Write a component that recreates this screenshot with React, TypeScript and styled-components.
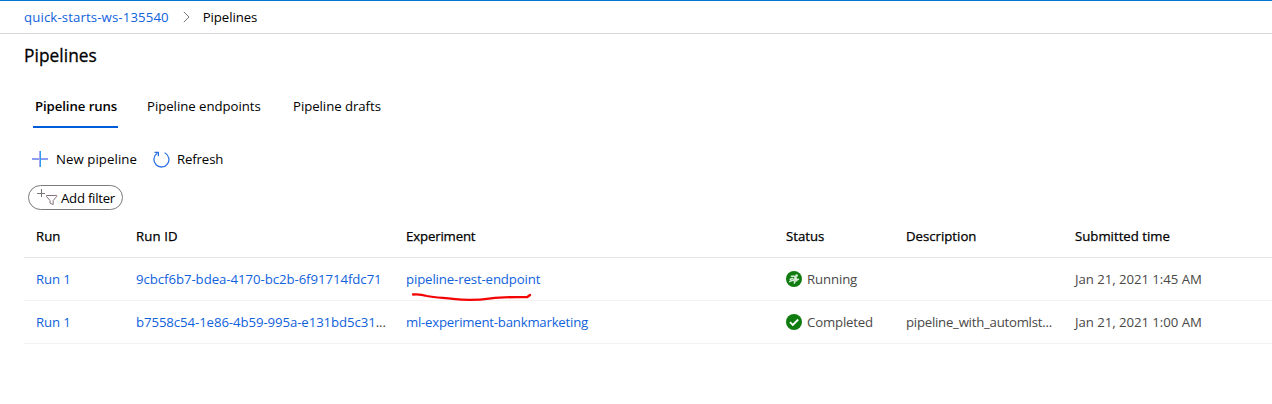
import React from "react";
import styled, { createGlobalStyle } from "styled-components";

const Global = createGlobalStyle`
  * { box-sizing: border-box; }
  body {
    margin: 0;
    background: #fff;
    color: #000;
    font-family: "Open Sans", "Noto Sans", sans-serif;
    font-size: 13.2px;
    line-height: 20px;
    overflow: hidden;
  }
`;

const Page = styled.div`
  height: 404px;
  border-top: 1px solid #0078d4;
  white-space: nowrap;
`;
const Label = styled.span<{ $ls?: number }>`
  letter-spacing: ${(p) => p.$ls ?? 0}px;
`;
const Breadcrumb = styled.nav`
  display: flex;
  align-items: center;
  height: 33px;
  padding-left: 24px;
  border-bottom: 1px solid #d6d6d6;
`;
const Link = styled.a<{ $ls?: number }>`
  color: #1062dc;
  letter-spacing: ${(p) => p.$ls ?? 0}px;
`;
const Chevron = styled.svg`
  margin: 0 13px 0 14px;
`;
const Title = styled.h1`
  margin: 9px 0 0 24px;
  font-size: 17.3px;
  line-height: 26px;
  font-weight: 400;
  letter-spacing: 0.07px;
  -webkit-text-stroke: 0.3px #000;
`;
const Tabs = styled.div`
  display: flex;
  height: 44px;
  margin: 15px 0 0 33px;
`;
const Tab = styled.div<{ $active?: boolean; $width: number; $ls?: number }>`
  width: ${(p) => p.$width}px;
  height: 44px;
  padding: 12px 0 0 2px;
  margin-right: 27px;
  font-weight: ${(p) => (p.$active ? 600 : 400)};
  letter-spacing: ${(p) => p.$ls ?? 0}px;
  border-bottom: 2px solid ${(p) => (p.$active ? "#015cda" : "transparent")};
`;
const Toolbar = styled.div`
  display: flex;
  align-items: center;
  height: 20px;
  margin: 21px 0 0 32px;
`;
const Command = styled.div<{ $width: number; $gap?: number }>`
  display: flex;
  align-items: center;
  gap: ${(p) => p.$gap ?? 8}px;
  width: ${(p) => p.$width}px;
`;
const FilterPill = styled.div`
  display: flex;
  align-items: center;
  width: 95px;
  height: 25px;
  margin: 16px 0 0 28px;
  padding: 1px 0 0 8px;
  gap: 3px;
  border: 1px solid #7c7a78;
  border-radius: 13px;
`;
const Table = styled.div`
  margin-left: 24px;
`;
const Row = styled.div<{ $head?: boolean }>`
  display: grid;
  grid-template-columns: 100px 270px 380px 120px 169px 1fr;
  align-items: center;
  height: ${(p) => (p.$head ? 48 : 43)}px;
  padding: ${(p) => (p.$head ? "5px 0 0 12px" : "0 0 0 12px")};
  border-bottom: 1px solid ${(p) => (p.$head ? "#e8e7e6" : "#f3f2f1")};
  color: ${(p) => (p.$head ? "#000" : "#4a4846")};
  -webkit-text-stroke: ${(p) => (p.$head ? "0.25px #000" : "0")};
`;
const Cell = styled.div`
  display: flex;
  align-items: center;
`;
const Status = styled.div`
  display: flex;
  align-items: center;
  gap: 5px;
`;
const Marked = styled.div`
  position: relative;
`;
const Stroke = styled.svg`
  position: absolute;
  left: 3px;
  top: 21px;
`;

const PlusIcon = () => (
  <svg width="16" height="16" viewBox="0 0 16 16" fill="none" strokeWidth="2">
    <path d="M0 8H16" stroke="#8d9df2" />
    <path d="M7.5 0V16" stroke="#a9a6f2" strokeWidth="1" />
    <path d="M8.5 0V16" stroke="#2f9cf4" strokeWidth="1" />
  </svg>
);
const RefreshIcon = () => (
  <svg width="17" height="17" viewBox="0 0 17 17" fill="none" stroke="#2a6fe4" strokeWidth="1.25">
    <path d="M11.6 1.7A7.5 7.5 0 1 1 4.2 2.3M1.5 1.3H5.4V5.3" />
  </svg>
);
const FilterIcon = () => (
  <svg width="21" height="18" viewBox="0 0 21 18" fill="none" stroke="#777" strokeWidth="1">
    <path d="M4.5 0V8M0 4.5H8" />
    <path d="M9.5 6.5H19.7V7.5L16.2 11.5V15.5L13 14.2V11.5L9.5 7.5Z" stroke="#83727b" />
  </svg>
);
const RunningIcon = () => (
  <svg width="16" height="16" viewBox="0 0 16 16">
    <circle cx="8" cy="8" r="8" fill="#107c10" />
    <g fill="none" stroke="#d8ebd8" strokeWidth="1.6" strokeLinecap="round" strokeLinejoin="round">
      <path d="M5.4 5.2L8.2 5.2L9.8 6.2L7.2 9.2L5.8 9.6L3.8 10.4" />
      <path d="M4.2 8.2L6.4 7.4M7.4 9.4L9 10.4L8.4 12M9.8 6.6L10.6 8.6L12.4 8.4M9.2 8.4L10.6 9.8" />
    </g>
    <circle cx="10.6" cy="4.6" r="1.35" fill="#d8ebd8" />
  </svg>
);
const CompletedIcon = () => (
  <svg width="16" height="16" viewBox="0 0 16 16">
    <circle cx="8" cy="8" r="8" fill="#107c10" />
    <path d="M4 8.2L6.8 10.9L12.2 5.5" fill="none" stroke="#fff" strokeWidth="1.8" />
  </svg>
);

export default function App() {
  return (
    <>
      <Global />
      <Page>
        <Breadcrumb>
          <Link $ls={0.13}>quick-starts-ws-135540</Link>
          <Chevron width="7" height="12" viewBox="0 0 7 12" fill="none" stroke="#777">
            <path d="M0.8 0.8L6 6L0.8 11.2" />
          </Chevron>
          <Label $ls={-0.08}>Pipelines</Label>
        </Breadcrumb>
        <Title>Pipelines</Title>
        <Tabs>
          <Tab $active $width={85} $ls={-0.08}>Pipeline runs</Tab>
          <Tab $width={119} $ls={-0.03}>Pipeline endpoints</Tab>
          <Tab $width={95} $ls={-0.04}>Pipeline drafts</Tab>
        </Tabs>
        <Toolbar>
          <Command $width={121}><PlusIcon /><Label $ls={0.08}>New pipeline</Label></Command>
          <Command $width={90} $gap={7}><RefreshIcon /><Label $ls={-0.13}>Refresh</Label></Command>
        </Toolbar>
        <FilterPill><FilterIcon /><Label $ls={-0.25}>Add filter</Label></FilterPill>
        <Table>
          <Row $head>
            <Cell>Run</Cell>
            <Cell><Label $ls={0.1}>Run ID</Label></Cell>
            <Cell><Label $ls={-0.14}>Experiment</Label></Cell>
            <Cell>Status</Cell>
            <Cell>Description</Cell>
            <Cell>Submitted time</Cell>
          </Row>
          <Row>
            <Cell><Link $ls={-0.15}>Run 1</Link></Cell>
            <Cell><Link $ls={-0.05}>9cbcf6b7-bdea-4170-bc2b-6f91714fdc71</Link></Cell>
            <Cell>
              <Marked>
                <Link $ls={-0.12}>pipeline-rest-endpoint</Link>
                <Stroke width="124" height="12" viewBox="0 0 124 12" fill="none" stroke="#f30505" strokeWidth="2.3" strokeLinecap="round" strokeLinejoin="round">
                  <path d="M4 4.5C9 4 13 4.5 18 6C27 8 35 7.6 44 8.8C57 10.5 70 10 82 8.3C94 6.8 103 7.2 118 7.2L121 5" />
                </Stroke>
              </Marked>
            </Cell>
            <Cell><Status><RunningIcon /><Label $ls={-0.12}>Running</Label></Status></Cell>
            <Cell />
            <Cell><Label $ls={-0.04}>Jan 21, 2021 1:45 AM</Label></Cell>
          </Row>
          <Row>
            <Cell><Link $ls={-0.15}>Run 1</Link></Cell>
            <Cell><Link $ls={-0.08}>b7558c54-1e86-4b59-995a-e131bd5c31</Link><Label>...</Label></Cell>
            <Cell><Link $ls={-0.22}>ml-experiment-bankmarketing</Link></Cell>
            <Cell><Status><CompletedIcon /><Label $ls={-0.16}>Completed</Label></Status></Cell>
            <Cell><Label $ls={-0.24}>pipeline_with_automlst...</Label></Cell>
            <Cell><Label $ls={-0.04}>Jan 21, 2021 1:00 AM</Label></Cell>
          </Row>
        </Table>
      </Page>
    </>
  );
}
